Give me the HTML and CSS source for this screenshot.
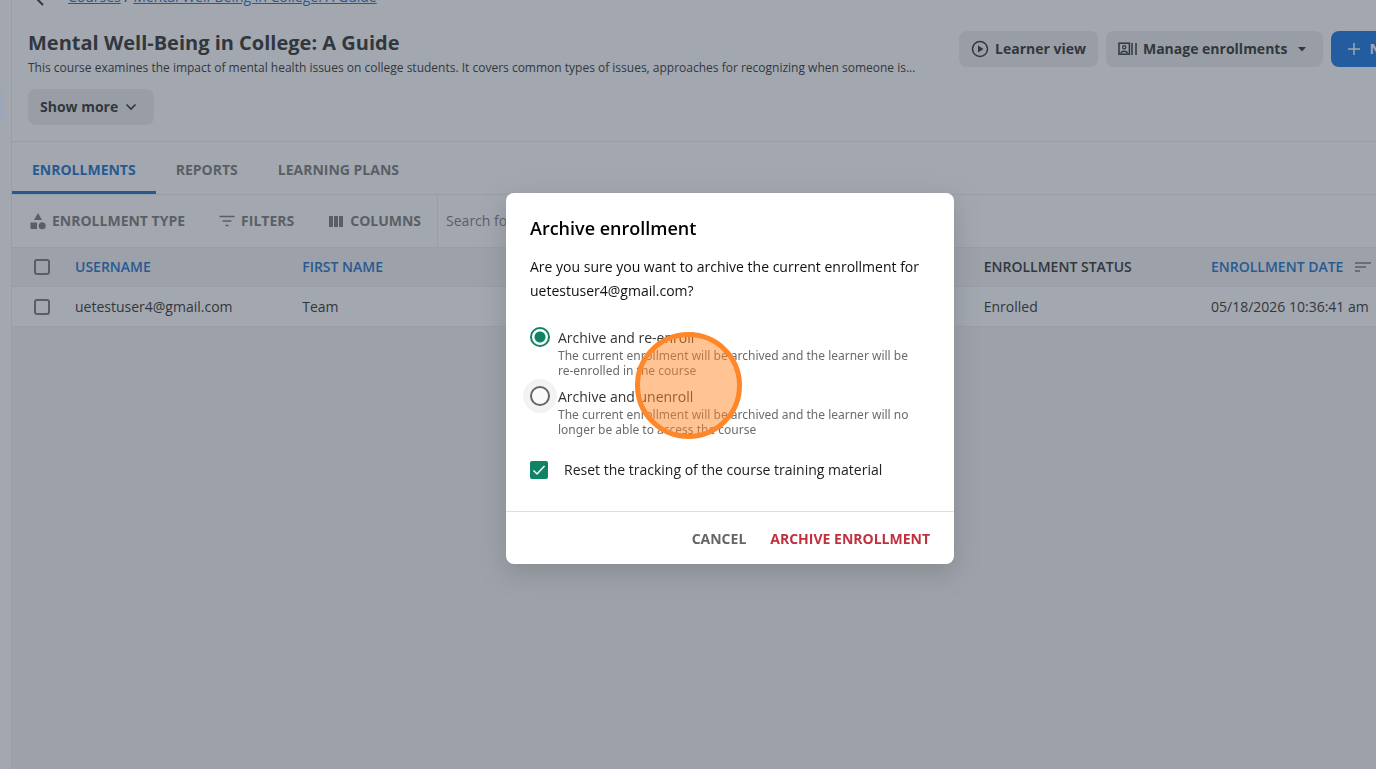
FILE: index.html
```html
<!DOCTYPE html>
<html lang="en">
<head>
<meta charset="utf-8">
<title>Mental Well-Being in College: A Guide</title>
<link rel="stylesheet" href="styles.css">
</head>
<body>
<div class="app">
  <aside class="rail"><span class="rail-marker"></span></aside>
  <main class="page">
    <nav class="crumbs" aria-label="Breadcrumb">
      <button class="back" aria-label="Back"><svg width="16" height="16" viewBox="0 0 16 16"><path d="M11 2 5 8l6 6" fill="none" stroke="currentColor" stroke-width="2"/></svg></button>
      <span><a href="#">Courses</a> / <a href="#">Mental Well-Being in College: A Guide</a></span>
    </nav>
    <header class="course">
      <div class="course-text">
        <h1>Mental Well-Being in College: A Guide</h1>
        <p>This course examines the impact of mental health issues on college students. It covers common types of issues, approaches for recognizing when someone is...</p>
        <button class="btn btn-more">Show more <svg width="14" height="14" viewBox="0 0 14 14"><path d="m2.500 4.500 4.500 4.500 4.500-4.500" fill="none" stroke="currentColor" stroke-width="1.600"/></svg></button>
      </div>
      <div class="actions">
        <button class="btn"><svg width="18" height="18" viewBox="0 0 18 18"><circle cx="9" cy="9" r="7.500" fill="none" stroke="currentColor" stroke-width="1.500"/><path d="m7 5.500 5.500 3.500L7 12.500z" fill="currentColor"/></svg>Learner view</button>
        <button class="btn btn-menu"><svg width="19" height="14" viewBox="0 0 19 14"><rect x="1" y="1.200" width="10.400" height="11" fill="none" stroke="currentColor" stroke-width="1.500"/><circle cx="6.200" cy="5.200" r="1.600" fill="none" stroke="currentColor" stroke-width="1.200"/><path d="M2.800 11.200c1-2.500 5.800-2.500 6.800 0" fill="none" stroke="currentColor" stroke-width="1.500"/><path d="M14 1v12M18 1v12" stroke="currentColor" stroke-width="1.500"/></svg>Manage enrollments<svg class="caret" width="10" height="5" viewBox="0 0 10 5"><path d="M1 0h8L5 4.500z" fill="currentColor"/></svg></button>
        <button class="btn btn-primary"><svg width="14" height="14" viewBox="0 0 14 14"><path d="M7 1v12M1 7h12" stroke="currentColor" stroke-width="1.500"/></svg>New</button>
      </div>
    </header>
    <nav class="tabs" aria-label="Course sections">
      <a class="tab tab-active" href="#">ENROLLMENTS</a>
      <a class="tab" href="#">REPORTS</a>
      <a class="tab" href="#">LEARNING PLANS</a>
    </nav>
    <div class="toolbar">
      <div class="tools">
        <button class="tool"><svg width="18" height="18" viewBox="0 0 18 18" fill="currentColor"><path d="m9 1 4 7H5zM1.500 10.500H8V17H1.500z"/><circle cx="13.200" cy="13.700" r="3.500"/></svg>ENROLLMENT TYPE</button>
        <button class="tool"><svg width="18" height="18" viewBox="0 0 18 18"><path d="M1.500 4.500h15M4.500 9h9M7.500 13.500h3" stroke="currentColor" stroke-width="1.500"/></svg>FILTERS</button>
        <button class="tool"><svg width="18" height="18" viewBox="0 0 18 18" fill="currentColor"><path d="M2 4h4v11H2zM7 4h4v11H7zM12 4h4v11h-4z"/></svg>COLUMNS</button>
      </div>
      <input class="search" type="search" placeholder="Search for..." aria-label="Search">
    </div>
    <table class="grid">
      <colgroup><col class="col-check"><col><col><col><col><col><col class="col-date"></colgroup>
      <thead>
        <tr>
          <th class="check"><input type="checkbox" class="box" aria-label="Select all"></th>
          <th><a href="#">USERNAME</a></th>
          <th><a href="#">FIRST NAME</a></th>
          <td></td>
          <td></td>
          <th>ENROLLMENT STATUS</th>
          <th><span class="sorted"><a href="#">ENROLLMENT DATE</a><svg width="16" height="10" viewBox="0 0 16 10"><path d="M0 1h16M0 5h11M0 9h5" stroke="currentColor" stroke-width="1.500"/></svg></span></th>
        </tr>
      </thead>
      <tbody>
        <tr>
          <td class="check"><input type="checkbox" class="box" aria-label="Select uetestuser4@gmail.com"></td>
          <td>uetestuser4@gmail.com</td>
          <td>Team</td>
          <td></td>
          <td></td>
          <td>Enrolled</td>
          <td>05/18/2026 10:36:41 am</td>
        </tr>
      </tbody>
    </table>
  </main>
</div>

<div class="overlay">
  <section class="dialog" role="dialog" aria-modal="true" aria-labelledby="dialog-title">
    <div class="dialog-body">
      <h2 id="dialog-title">Archive enrollment</h2>
      <p class="question">Are you sure you want to archive the current enrollment for uetestuser4@gmail.com?</p>
      <div class="options">
        <div class="option">
          <input type="radio" class="radio" name="mode" id="mode-reenroll" checked>
          <label for="mode-reenroll">Archive and re-enroll<small>The current enrollment will be archived and the learner will be <span class="keep">re-enrolled</span> in the course</small></label>
        </div>
        <div class="option">
          <input type="radio" class="radio radio-hover" name="mode" id="mode-unenroll">
          <label for="mode-unenroll">Archive and unenroll<small>The current enrollment will be archived and the learner will no longer be able to access the course</small></label>
        </div>
      </div>
      <div class="reset">
        <span class="tick"><input type="checkbox" id="reset" checked><svg width="18" height="18" viewBox="0 0 18 18"><path d="m3.500 9.500 3.500 3.500 7.500-8" fill="none" stroke="#fff" stroke-width="1.500"/></svg></span>
        <label for="reset">Reset the tracking of the course training material</label>
      </div>
    </div>
    <footer class="dialog-actions">
      <button class="text-btn">CANCEL</button>
      <button class="text-btn danger">ARCHIVE ENROLLMENT</button>
    </footer>
    <span class="click-marker"></span>
  </section>
</div>
</body>
</html>
```

FILE: styles.css
```css
* { box-sizing: border-box; }

body {
  margin: 0;
  overflow: hidden;
  background: #9da1aa;
  color: #31373d;
  font: 14px/20px "Open Sans", sans-serif;
}

button, input { font: inherit; color: inherit; }
button { border: 0; padding: 0; background: none; cursor: pointer; }
a { text-decoration: none; }
svg { display: block; flex: none; }

.app { display: flex; min-height: 100vh; }

.rail {
  flex: none;
  width: 12px;
  padding-top: 90px;
  background: #a3a7b0;
  border-right: 1px solid #999da6;
}
.rail-marker {
  display: block;
  width: 3px;
  height: 32px;
  background: #9aa7b8;
  border-radius: 0 8px 8px 0;
}

.page { flex: 1; min-width: 0; }

.crumbs {
  display: flex;
  align-items: flex-end;
  gap: 20px;
  height: 7px;
  padding-left: 20px;
  overflow: hidden;
  background: #a3a7b0;
}
.crumbs a { color: #285a91; text-decoration: underline; }

.course {
  display: grid;
  grid-template-columns: minmax(0, 1fr) 417px;
  gap: 28px;
  padding: 24px 0 16px 16px;
  background: #a3a7b0;
  border-bottom: 1px solid #999da6;
}
.course h1 { margin: 0; font-size: 20px; line-height: 24px; font-weight: 700; }
.course p { margin: 3px 0 11px; font-size: 12px; white-space: nowrap; }

.actions { display: flex; align-items: flex-start; gap: 8px; overflow: hidden; }

.btn {
  display: flex;
  flex: none;
  align-items: center;
  gap: 6px;
  height: 36px;
  padding: 0 12px;
  border-radius: 8px;
  background: #999ea6;
  font-weight: 700;
}
.btn-more { padding: 0 16px 0 12px; }
.btn-menu { padding-right: 16px; }
.caret { margin-left: 4px; }
.btn-primary { gap: 8px; padding: 0 16px; background: #235d9f; color: #a3a7b0; }

.tabs {
  display: flex;
  height: 53px;
  background: #a3a7b0;
  border-bottom: 1px solid #999da6;
}
.tab {
  display: flex;
  align-items: center;
  padding: 6px 20px 0;
  border-bottom: 3px solid transparent;
  color: #5a5f66;
  font-weight: 700;
}
.tab-active { color: #285a91; border-color: #285a91; }

.toolbar {
  display: flex;
  height: 53px;
  background: #a3a7b0;
  border-bottom: 1px solid #999da6;
}
.tools { display: flex; gap: 33px; padding: 0 16px 0 17px; }
.tool {
  display: flex;
  align-items: center;
  gap: 5px;
  color: #5a5f66;
  font-weight: 700;
}
.search {
  flex: 1;
  min-width: 0;
  padding: 0 8px;
  border: 0;
  border-left: 1px solid #999da6;
  background: none;
}
.search::placeholder { color: #5a5f66; opacity: 1; }

.grid { width: 100%; table-layout: fixed; border-collapse: separate; border-spacing: 0; }
.col-check { width: 47px; }
.col-date { width: 181px; }
.grid th, .grid td {
  height: 40px;
  padding: 0 0 0 16px;
  border-bottom: 1px solid #999da6;
  text-align: left;
  white-space: nowrap;
}
.grid thead th, .grid thead td { height: 39px; }
.grid th { font-weight: 600; }
.grid th a { color: #285a91; }
.grid tbody { background: #a3a7b0; }
.grid .check { padding-left: 22px; }
.sorted { display: flex; align-items: center; gap: 12px; color: #5a5f66; }

.box {
  display: block;
  appearance: none;
  width: 16px;
  height: 16px;
  margin: 0;
  border: 2px solid #5a5f66;
  border-radius: 3px;
}

.overlay {
  position: fixed;
  inset: 0;
  display: grid;
  place-items: center;
  padding: 0 0 12px 84px;
}
.dialog {
  position: relative;
  width: 448px;
  background: #fff;
  border-radius: 8px;
  box-shadow: 0 8px 24px rgba(100, 110, 108, 0.4);
}
.dialog-body { padding: 23px 24px 31px; }
.dialog h2 { margin: 0 0 15px; color: #000; font-size: 18px; line-height: 24px; font-weight: 600; }
.question { margin: 0 0 24px; color: #111; line-height: 24px; }

.options { display: grid; gap: 8px; }
.option { display: flex; gap: 8px; color: #333; }
.option label { flex: 1; line-height: 21px; }
.option small {
  display: block;
  color: #6b6b6b;
  font: 12px/15px "Noto Sans", "Open Sans", sans-serif;
}
.keep { white-space: nowrap; }

.radio {
  flex: none;
  appearance: none;
  width: 20px;
  height: 20px;
  margin: 0;
  border: 2px solid #666;
  border-radius: 50%;
}
.radio:checked {
  border-color: #118365;
  background: radial-gradient(circle, #118365 5px, #fff 6px);
}
.radio-hover { background: #fafafa; box-shadow: 0 0 0 7px #f3f3f3; }

.reset { display: flex; align-items: center; gap: 16px; margin-top: 23px; color: #222; }
.tick { display: grid; }
.tick > * { grid-area: 1 / 1; }
.tick input {
  appearance: none;
  width: 18px;
  height: 18px;
  margin: 0;
  border-radius: 2px;
  background: #118365;
}
.tick svg { pointer-events: none; }

.dialog-actions {
  display: flex;
  justify-content: flex-end;
  gap: 24px;
  padding: 17px 24px 15px;
  border-top: 1px solid #dedede;
}
.text-btn { color: #666; font-weight: 700; }
.danger { color: #c0303f; }

.click-marker {
  position: absolute;
  left: 129px;
  top: 139px;
  width: 107px;
  height: 107px;
  border: 5px solid #ff8729;
  border-radius: 50%;
  background: rgba(255, 135, 41, 0.5);
  pointer-events: none;
}
```
